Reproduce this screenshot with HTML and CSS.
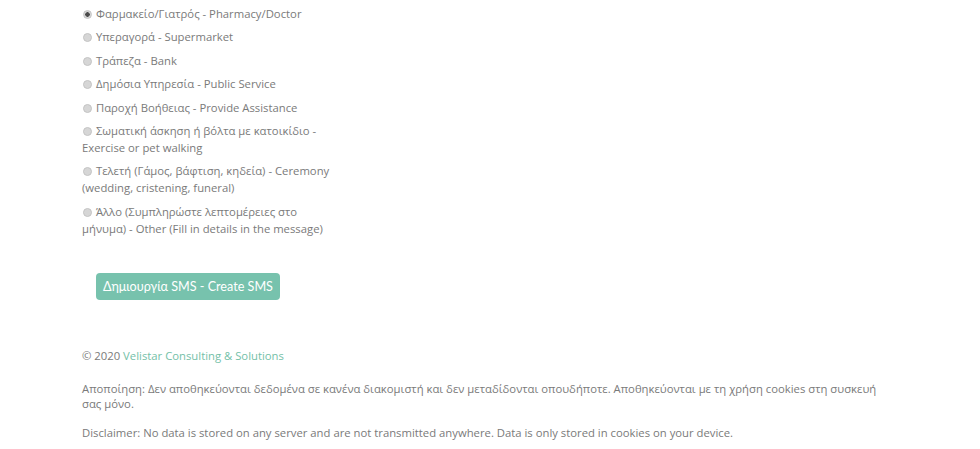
FILE: index.html
```html
<!DOCTYPE html>
<html lang="el">
<head>
    <meta charset="UTF-8">
    <meta name="viewport" content="width=device-width, initial-scale=1.0">
    <title>SMS</title>
    <link rel="stylesheet" href="styles.css">
</head>
<body>
    <div class="container">
        <form class="reasons">
            <label class="reason"><input type="radio" name="reason" checked> Φαρμακείο/Γιατρός - Pharmacy/Doctor</label>
            <label class="reason"><input type="radio" name="reason"> Υπεραγορά - Supermarket</label>
            <label class="reason"><input type="radio" name="reason"> Τράπεζα - Bank</label>
            <label class="reason"><input type="radio" name="reason"> Δημόσια Υπηρεσία - Public Service</label>
            <label class="reason"><input type="radio" name="reason"> Παροχή Βοήθειας - Provide Assistance</label>
            <label class="reason"><input type="radio" name="reason"> Σωματική άσκηση ή βόλτα με κατοικίδιο - Exercise or pet walking</label>
            <label class="reason"><input type="radio" name="reason"> Τελετή (Γάμος, βάφτιση, κηδεία) - Ceremony (wedding, cristening, funeral)</label>
            <label class="reason"><input type="radio" name="reason"> Άλλο (Συμπληρώστε λεπτομέρειες στο μήνυμα) - Other (Fill in details in the message)</label>
            <button type="button" class="create-btn">Δημιουργία SMS - Create SMS</button>
        </form>

        <footer class="footer">
            <p class="copy">© 2020 <a href="#">Velistar Consulting &amp; Solutions</a></p>
            <p class="greek">Αποποίηση: Δεν αποθηκεύονται δεδομένα σε κανένα διακομιστή και δεν μεταδίδονται οπουδήποτε. Αποθηκεύονται με τη χρήση cookies στη συσκευή σας μόνο.</p>
            <p>Disclaimer: No data is stored on any server and are not transmitted anywhere. Data is only stored in cookies on your device.</p>
        </footer>
    </div>
</body>
</html>
```

FILE: styles.css
```css
body {
    margin: 0;
    font-family: 'Open Sans', 'Noto Sans', sans-serif;
    font-size: 11.3px;
    color: #7a7a7a;
    background-color: #ffffff;
}

.container {
    padding: 5px 0 0 82px;
    width: 800px;
}

.reasons {
    width: 258px;
}

.reason {
    display: block;
    line-height: 17px;
    margin-bottom: 6.4px;
}

/* grey radios like the old browser ones */
.reason input {
    appearance: none;
    -webkit-appearance: none;
    box-sizing: border-box;
    width: 9px;
    height: 9px;
    margin: 0 1px 0 1px;
    border-radius: 50%;
    border: 1px solid #c4c4c4;
    background-color: #d6d6d6;
    vertical-align: -1px;
}

.reason input:checked {
    background: radial-gradient(circle, #4a4a4a 0 2px, #d6d6d6 2.5px);
}

.create-btn {
    margin: 30px 0 0 14px;
    height: 27px;
    padding: 0 7px;
    border: none;
    border-radius: 4px;
    background-color: #77c2ad;
    color: #ffffff;
    font-family: Lato, 'Noto Sans', sans-serif;
    font-size: 12.6px;
}

.footer {
    margin-top: 48px;
}

.footer p {
    margin: 0 0 14px;
    line-height: 15px;
}

.footer .copy {
    margin-bottom: 18px;
}

.footer a {
    color: #74bfa8;
    text-decoration: none;
}
```
